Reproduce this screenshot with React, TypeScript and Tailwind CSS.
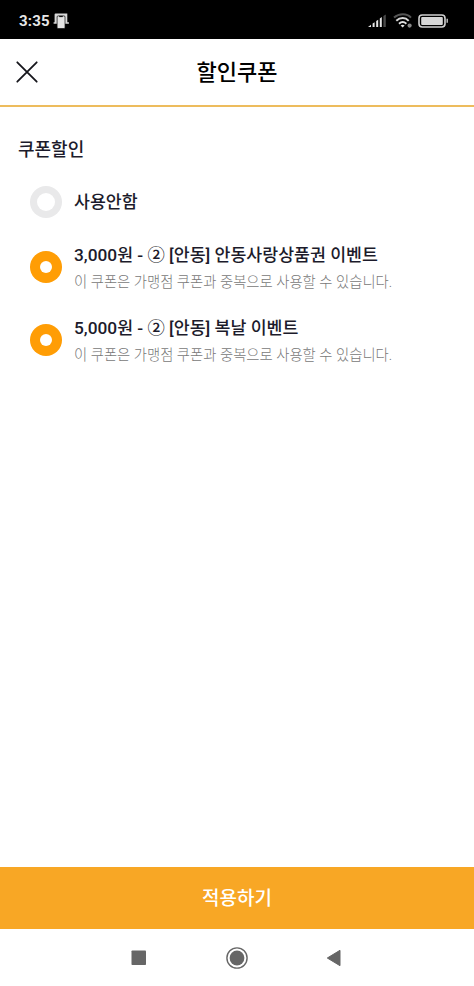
type Coupon = { title: string; note?: string; selected: boolean };

const coupons: Coupon[] = [
  { title: '사용안함', selected: false },
  {
    title: '3,000원 - ② [안동] 안동사랑상품권 이벤트',
    note: '이 쿠폰은 가맹점 쿠폰과 중복으로 사용할 수 있습니다.',
    selected: true,
  },
  {
    title: '5,000원 - ② [안동] 복날 이벤트',
    note: '이 쿠폰은 가맹점 쿠폰과 중복으로 사용할 수 있습니다.',
    selected: true,
  },
];

function StatusBar() {
  return (
    <div className="flex h-[39px] shrink-0 items-center bg-black pl-[19px] pr-[25px] pt-[3px]">
      <span className="text-[15px] font-bold leading-5 tracking-[0.2px] text-[#e6e6e6]">3:35</span>
      <svg className="ml-[3px]" width="17" height="16" viewBox="0 0 17 16">
        <path d="M1.6 1.5q0-.9.9-.9h11.8v8.7h1.6v1.5h-4V3.2H4.6v7.6H.6V9.3h1z" fill="#d8d8d8" />
        <rect x="4.1" y="2.9" width="7.9" height="12.6" rx="1" fill="#e4e4e4" stroke="#111" strokeWidth="0.7" />
        <path d="M6.2 3.5h3.6" stroke="#111" strokeWidth="1.2" />
      </svg>
      <svg className="ml-auto mb-px" width="19" height="14" viewBox="0 0 19 14">
        <path d="M0 13l3-2.2V13zM4.6 9.4l2-1.2V13h-2zM8.2 7l2-1.2V13h-2zM11.8 4.4l2-1.3V13h-2z" fill="#e6e6e6" />
        <path d="M15.4 2l2.4-1.6V13h-2.4z" fill="#4a4a4a" />
      </svg>
      <svg className="ml-[6px]" width="20" height="16" viewBox="0 0 20 16" fill="none">
        <path d="M1 4.6C6 .2 14 .2 18 4.6" stroke="#555" strokeWidth="2" />
        <path d="M3.3 7.8c3.8-3.6 9.2-3.6 12.4 0" stroke="#d8d8d8" strokeWidth="2" />
        <path d="M6 10.7c2.2-2 5.2-2 7.4 0" stroke="#e2e2e2" strokeWidth="1.9" />
        <path d="M7.6 12.6q2-1.6 4 0l-2 2z" fill="#e2e2e2" />
        <circle cx="16.6" cy="12.6" r="2.1" fill="#888" />
      </svg>
      <svg className="ml-[5px] mb-px" width="31" height="14" viewBox="0 0 31 14" fill="none">
        <rect x="1" y="1" width="26" height="12" rx="3.2" stroke="#d0d0d0" strokeWidth="1.6" />
        <rect x="3.2" y="3.1" width="21.6" height="7.8" rx="1" fill="#d6d6d6" />
        <path d="M28.5 4.8h1.4v4h-1.4z" fill="#c4c4c4" />
      </svg>
    </div>
  );
}

function Radio({ selected }: { selected: boolean }) {
  return selected ? (
    <span className="flex size-8 shrink-0 items-center justify-center rounded-full bg-[#ff9d05]">
      <span className="size-3 rounded-full bg-white" />
    </span>
  ) : (
    <span className="flex size-8 shrink-0 items-center justify-center rounded-full bg-[#e9e9ea]">
      <span className="size-[18px] rounded-full bg-white" />
    </span>
  );
}

export default function App() {
  return (
    <div className="flex h-[986px] w-[474px] flex-col overflow-hidden bg-white font-[Roboto,'Noto_Sans_CJK_KR',sans-serif]">
      <StatusBar />
      <header className="grid h-[68px] shrink-0 grid-cols-[1fr_auto_1fr] items-center border-b-2 border-[#edbc5d] px-4">
        <svg width="22" height="22" viewBox="0 0 22 22" fill="none" stroke="#16161c" strokeWidth="1.8" strokeLinecap="round">
          <path d="M1.3 1.3l19.4 19.4M20.7 1.3L1.3 20.7" />
        </svg>
        <h1 className="pt-px text-[22px] font-medium leading-8 text-black">할인쿠폰</h1>
      </header>
      <main className="flex-1 pt-[29px]">
        <h2 className="pl-[18px] text-[18px] font-medium leading-7 text-[#1c1b2b]">쿠폰할인</h2>
        <ul className="flex flex-col pl-[30px] pt-[22px]">
          {coupons.map((coupon) => (
            <li key={coupon.title} className="mb-6 flex items-center gap-3">
              <Radio selected={coupon.selected} />
              <div>
                <p className="whitespace-nowrap text-[17.3px] font-medium leading-[27px] text-[#1c1b2b]">{coupon.title}</p>
                {coupon.note && (
                  <p className="whitespace-nowrap pt-[5px] text-[14.35px] font-light leading-[17px] text-[#787878]">{coupon.note}</p>
                )}
              </div>
            </li>
          ))}
        </ul>
      </main>
      <button className="h-[62px] shrink-0 bg-[#f8a725] pt-[3px] text-[19px] font-medium text-white">적용하기</button>
      <nav className="flex h-[57px] shrink-0 items-center pl-[131px]">
        <svg width="16" height="16" viewBox="0 0 16 16">
          <rect x="0.5" y="0.5" width="14.5" height="14.5" rx="0.8" fill="#666" />
        </svg>
        <svg className="ml-[79px]" width="22" height="22" viewBox="0 0 22 22">
          <circle cx="11" cy="11" r="10.1" fill="none" stroke="#666" strokeWidth="1.4" />
          <circle cx="11" cy="11" r="7.4" fill="#666" />
        </svg>
        <svg className="ml-[78px]" width="16" height="18" viewBox="0 0 16 18">
          <path d="M1.3 9L14 1.3v15.4z" fill="#666" stroke="#666" strokeWidth="1" strokeLinejoin="round" />
        </svg>
      </nav>
    </div>
  );
}
